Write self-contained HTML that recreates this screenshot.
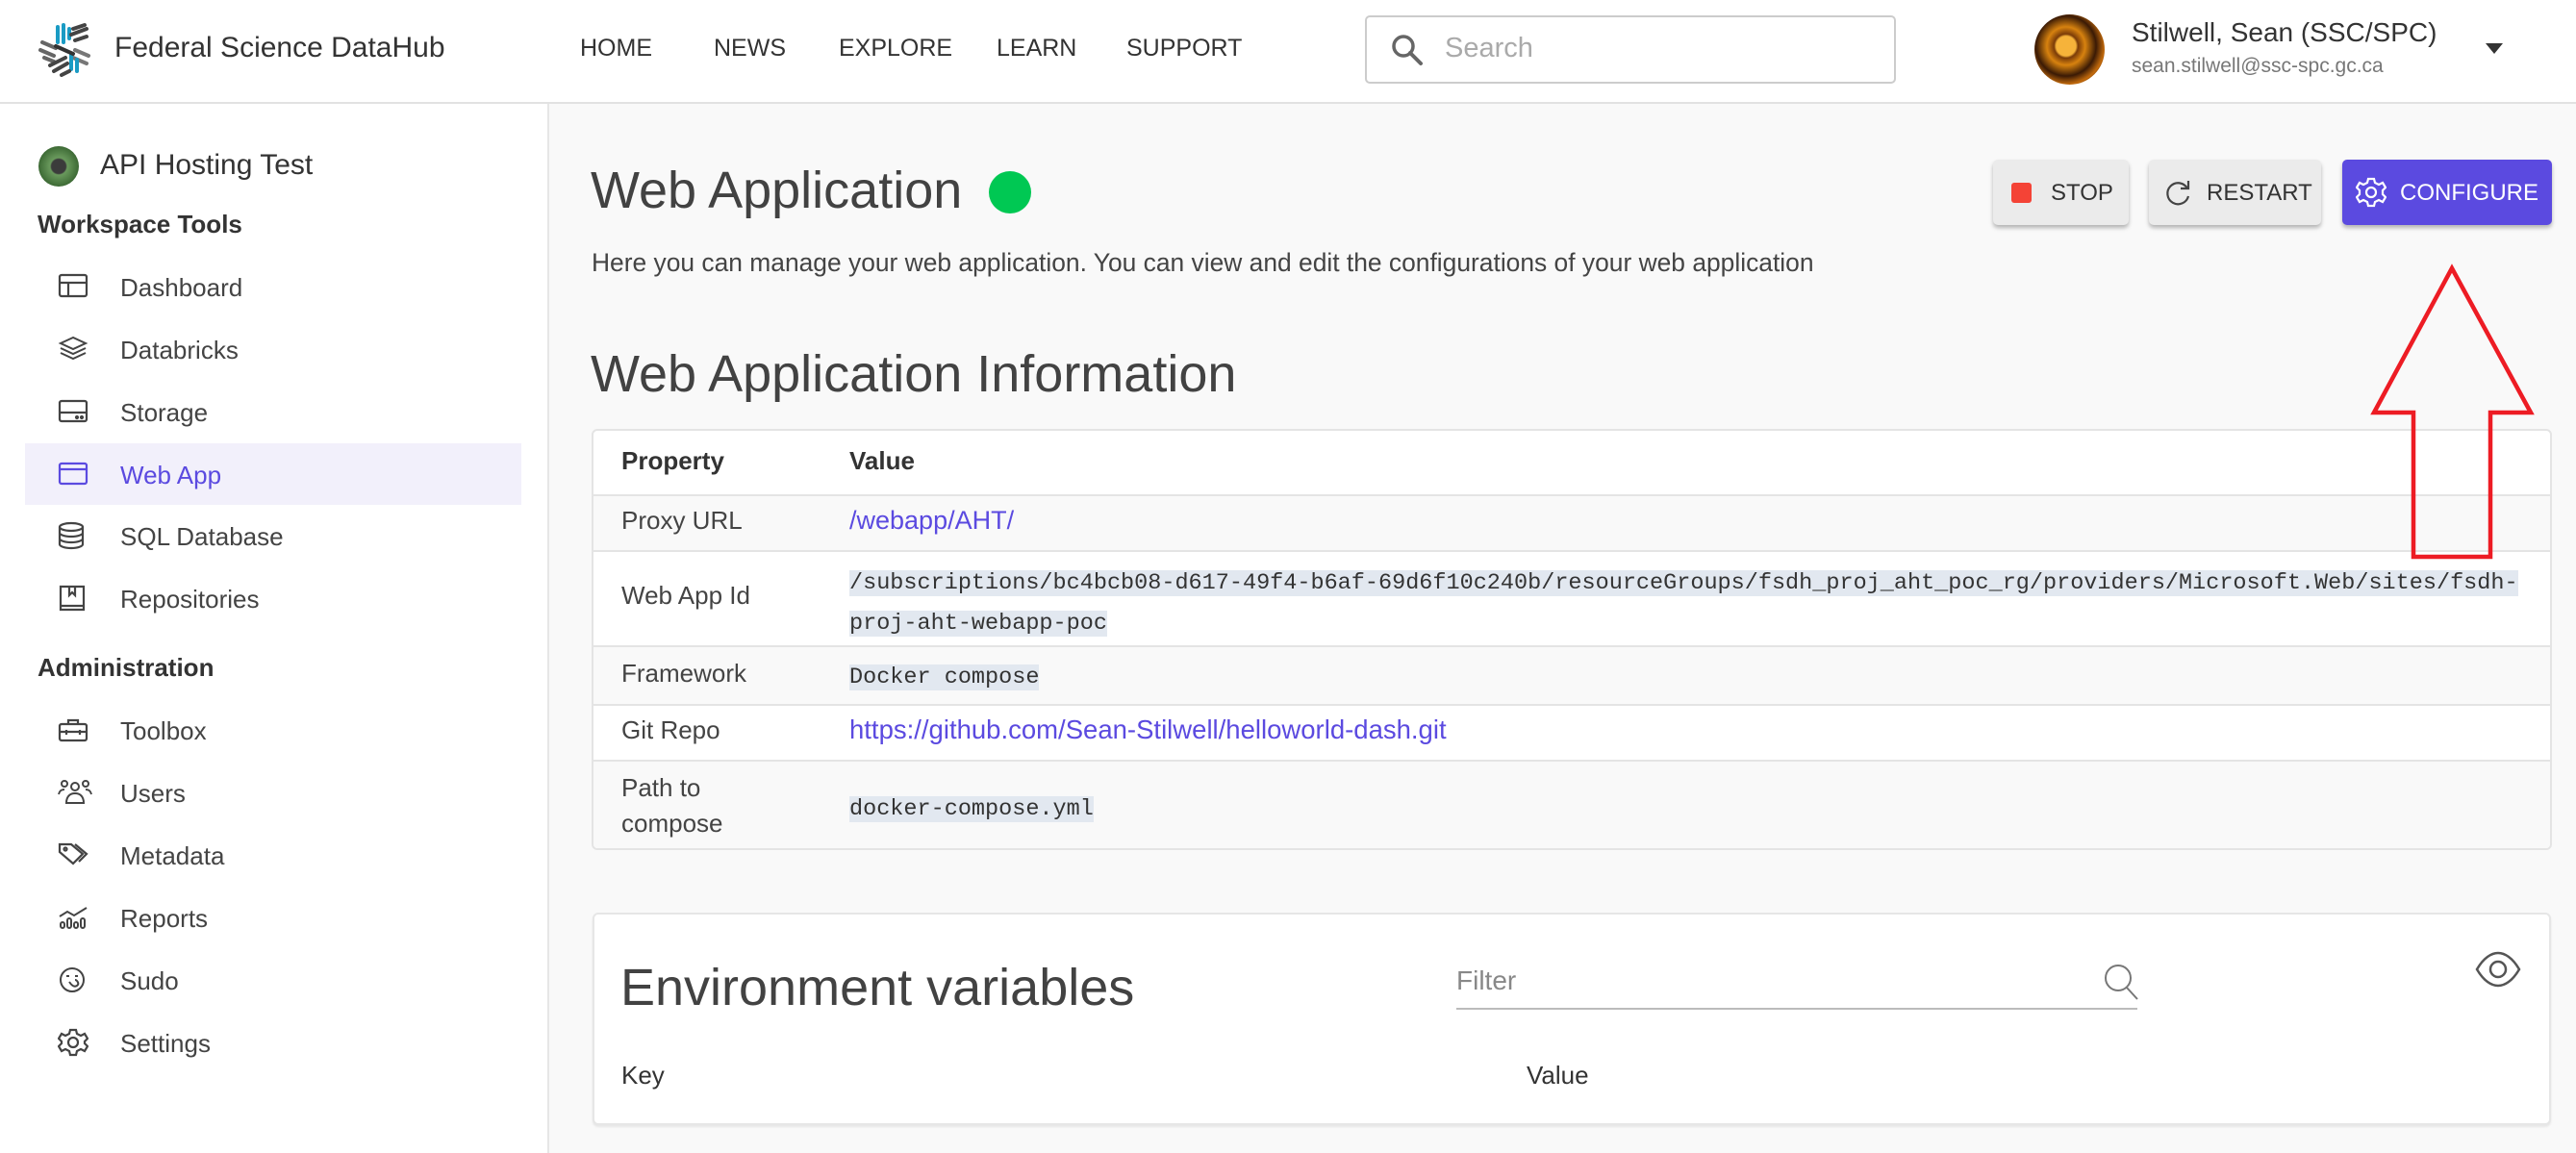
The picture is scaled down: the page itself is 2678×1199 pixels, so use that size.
<!DOCTYPE html>
<html><head><meta charset="utf-8">
<style>
*{margin:0;padding:0;box-sizing:border-box}
body{width:2678px;height:1199px;overflow:hidden;background:#f9f9f9;font-family:"Liberation Sans",sans-serif;color:#424242;position:relative}
.abs{position:absolute;white-space:nowrap}
#hdr{position:absolute;left:0;top:0;width:2678px;height:108px;background:#fff;border-bottom:2px solid #e2e2e2}
#side{position:absolute;left:0;top:108px;width:571px;height:1091px;background:#fff;border-right:2px solid #e6e6e6}
.nav{font-size:25px;color:#333;top:36px}
.si{position:absolute;left:0;width:571px;height:40px}
.si svg{position:absolute;left:60px;top:4px}
.si span{position:absolute;left:125px;top:5px;font-size:26px;color:#444}
.btn{position:absolute;top:166px;height:68px;border-radius:5px;background:#ebebeb;box-shadow:0 3px 4px rgba(0,0,0,.28);font-size:24px;color:#333}
.btn span{position:absolute;top:21px}
.mono{font-family:"Liberation Mono",monospace;font-size:23.5px;background:#e2e8f0;color:#333;line-height:38px}
.cell{position:absolute;font-size:26px;color:#444}
a{color:#5b4ae0;text-decoration:none}
</style></head><body>
<div id="hdr"></div>
<svg class="abs" style="left:38px;top:22px" width="60" height="58" viewBox="0 0 60 58">
<g stroke-linecap="round" stroke-width="4" fill="none">
<path d="M22 6v16M28 4v18M34 8v10" stroke="#1a9bc4"/>
<path d="M38 8l12 -4M36 14l16-6M40 20l12-4" stroke="#444"/>
<path d="M6 22l14 6M4 30l14 6M8 38l10 4" stroke="#666"/>
<path d="M40 30l14 6M38 38l14 6" stroke="#777"/>
<path d="M36 34v16M42 40v12" stroke="#1a9bc4"/>
<path d="M14 46l16-8M18 52l14-8M26 56l8-4" stroke="#444"/>
<path d="M20 26l18 8" stroke="#333"/>
</g></svg>
<div class="abs" style="left:119px;top:33px;font-size:30px;color:#333">Federal Science DataHub</div>
<div class="abs nav" style="left:603px">HOME</div>
<div class="abs nav" style="left:742px">NEWS</div>
<div class="abs nav" style="left:872px">EXPLORE</div>
<div class="abs nav" style="left:1036px">LEARN</div>
<div class="abs nav" style="left:1171px">SUPPORT</div>
<div class="abs" style="left:1419px;top:16px;width:552px;height:71px;border:2px solid #ccc;border-radius:5px;background:#fff"></div>
<svg class="abs" style="left:1446px;top:35px" width="34" height="34" viewBox="0 0 34 34"><circle cx="13" cy="13" r="10" stroke="#666" stroke-width="3.5" fill="none"/><path d="M20 20l11 11" stroke="#666" stroke-width="4" stroke-linecap="round"/></svg>
<div class="abs" style="left:1502px;top:34px;font-size:29px;color:#aaa">Search</div>
<div class="abs" style="left:2115px;top:15px;width:73px;height:73px;border-radius:50%;background:radial-gradient(circle at 45% 45%,#f6b33a 0 18%,#7a3b08 22%,#d7820f 35%,#3a1a05 55%,#c26a0c 70%,#2a1003 90%)"></div>
<div class="abs" style="left:2216px;top:18px;font-size:28px;color:#333">Stilwell, Sean (SSC/SPC)</div>
<div class="abs" style="left:2216px;top:57px;font-size:21px;color:#777">sean.stilwell@ssc-spc.gc.ca</div>
<svg class="abs" style="left:2584px;top:45px" width="18" height="12"><path d="M0 0h18L9 11z" fill="#333"/></svg>

<div id="side"></div>
<div class="abs" style="left:40px;top:152px;width:42px;height:42px;border-radius:50%;background:radial-gradient(circle,#3b3b3b 0 25%,#6a9a5d 30%,#3d6a35 70%)"></div>
<div class="abs" style="left:104px;top:155px;font-size:30px;color:#333">API Hosting Test</div>
<div class="abs" style="left:39px;top:218px;font-size:26px;font-weight:bold;color:#333">Workspace Tools</div>
<div class="abs" style="left:39px;top:679px;font-size:26px;font-weight:bold;color:#333">Administration</div>
<div class="abs" style="left:26px;top:461px;width:516px;height:64px;background:#f2f0fb"></div>

<div class="si" style="top:279px"><svg width="32" height="30" viewBox="0 0 32 30" fill="none" stroke="#444" stroke-width="2.2"><rect x="2" y="3" width="28" height="22" rx="2"/><path d="M2 11h28M11 11v14"/></svg><span>Dashboard</span></div>
<div class="si" style="top:344px"><svg width="32" height="30" viewBox="0 0 32 30" fill="none" stroke="#444" stroke-width="2"><path d="M16 3L3 9l13 6 13-6zM3 14l13 6 13-6M3 19l13 6 13-6"/></svg><span>Databricks</span></div>
<div class="si" style="top:409px"><svg width="32" height="30" viewBox="0 0 32 30" fill="none" stroke="#444" stroke-width="2.2"><rect x="2" y="4" width="28" height="21" rx="2"/><path d="M2 16h28"/><circle cx="20" cy="21" r="1" fill="#444"/><circle cx="25" cy="21" r="1" fill="#444"/></svg><span>Storage</span></div>
<div class="si" style="top:474px"><svg width="32" height="30" viewBox="0 0 32 30" fill="none" stroke="#5b4ae0" stroke-width="2.2"><rect x="2" y="4" width="28" height="21" rx="2"/><path d="M2 10h28"/></svg><span style="color:#5b4ae0">Web App</span></div>
<div class="si" style="top:538px"><svg width="32" height="30" viewBox="0 0 32 30" fill="none" stroke="#444" stroke-width="2.2"><ellipse cx="14" cy="6" rx="12" ry="4"/><path d="M2 6v18c0 2 5 4 12 4s12-2 12-4V6M2 12c0 2 5 4 12 4s12-2 12-4M2 18c0 2 5 4 12 4s12-2 12-4"/></svg><span>SQL Database</span></div>
<div class="si" style="top:603px"><svg width="32" height="30" viewBox="0 0 32 30" fill="none" stroke="#444" stroke-width="2.2"><path d="M3 3h24v20H3zM3 23v4h24v-4M12 3v9l3-3 3 3V3"/></svg><span>Repositories</span></div>
<div class="si" style="top:740px"><svg width="32" height="30" viewBox="0 0 32 30" fill="none" stroke="#444" stroke-width="2.2"><rect x="2" y="9" width="28" height="17" rx="2"/><path d="M11 9V5h10v4M2 17h28M9 15v5M23 15v5"/></svg><span>Toolbox</span></div>
<div class="si" style="top:805px"><svg width="36" height="30" viewBox="0 0 36 30" fill="none" stroke="#444" stroke-width="2"><circle cx="18" cy="9" r="4"/><circle cx="7" cy="6" r="3"/><circle cx="29" cy="6" r="3"/><path d="M9 26c0-7 4-10 9-10s9 3 9 10zM1 17c1-4 3-5 6-5M35 17c-1-4-3-5-6-5"/></svg><span>Users</span></div>
<div class="si" style="top:870px"><svg width="32" height="30" viewBox="0 0 32 30" fill="none" stroke="#444" stroke-width="2.2"><path d="M2 4h12l12 10-10 10L2 12zM18 4l12 10-8 8"/><circle cx="8" cy="9" r="1.5"/></svg><span>Metadata</span></div>
<div class="si" style="top:935px"><svg width="32" height="30" viewBox="0 0 32 30" fill="none" stroke="#444" stroke-width="2"><path d="M2 14l8-5 7 4 13-8"/><rect x="3" y="20" width="4" height="6" rx="2"/><rect x="10" y="16" width="4" height="10" rx="2"/><rect x="17" y="20" width="4" height="6" rx="2"/><rect x="24" y="16" width="4" height="10" rx="2"/></svg><span>Reports</span></div>
<div class="si" style="top:1000px"><svg width="32" height="30" viewBox="0 0 32 30" fill="none" stroke="#444" stroke-width="2"><circle cx="15" cy="15" r="12"/><path d="M9 11h3M18 11h3M12 17c2 3 5 6 8 4s0-6-2-6"/></svg><span>Sudo</span></div>
<div class="si" style="top:1065px"><svg width="32" height="30" viewBox="0 0 32 30" fill="none" stroke="#444" stroke-width="2.2"><circle cx="16" cy="15" r="5"/><path d="M13 2h6l1 4 4 2 4-2 3 5-3 3v2l3 3-3 5-4-2-4 2-1 4h-6l-1-4-4-2-4 2-3-5 3-3v-2l-3-3 3-5 4 2 4-2z"/></svg><span>Settings</span></div>

<div class="abs" style="left:614px;top:167px;font-size:54px;color:#424242">Web Application</div>
<div class="abs" style="left:1028px;top:178px;width:44px;height:44px;border-radius:50%;background:#00c853"></div>
<div class="abs" style="left:615px;top:258px;font-size:26.4px;color:#444">Here you can manage your web application. You can view and edit the configurations of your web application</div>

<div class="btn" style="left:2072px;width:141px"><div class="abs" style="left:19px;top:24px;width:21px;height:21px;background:#f44336;border-radius:3px"></div><span style="left:60px">STOP</span></div>
<div class="btn" style="left:2234px;width:179px"><svg class="abs" style="left:14px;top:18px" width="32" height="32" viewBox="0 0 32 32" fill="none" stroke="#444" stroke-width="2.2"><path d="M26 12A11 11 0 1 0 27 20"/><path d="M27 4v8h-8"/></svg><span style="left:60px">RESTART</span></div>
<div class="btn" style="left:2435px;width:218px;background:#5b4ae0;color:#fff"><svg class="abs" style="left:14px;top:18px" width="32" height="32" viewBox="0 0 32 32" fill="none" stroke="#fff" stroke-width="2.2"><circle cx="16" cy="16" r="5"/><path d="M13 2h6l1 4 4 2 4-2 3 5-3 3v4l3 3-3 5-4-2-4 2-1 4h-6l-1-4-4-2-4 2-3-5 3-3v-4l-3-3 3-5 4 2 4-2z"/></svg><span style="left:60px">CONFIGURE</span></div>

<div class="abs" style="left:614px;top:358px;font-size:54px;color:#424242">Web Application Information</div>

<div class="abs" style="left:615px;top:446px;width:2038px;height:438px;border:2px solid #e4e4e4;border-radius:6px;background:#fff;overflow:hidden">
 <div style="position:absolute;left:0;top:66px;width:100%;height:58px;background:#f9f9f9;border-top:2px solid #e4e4e4"></div>
 <div style="position:absolute;left:0;top:124px;width:100%;height:99px;border-top:2px solid #e4e4e4"></div>
 <div style="position:absolute;left:0;top:223px;width:100%;height:61px;background:#f9f9f9;border-top:2px solid #e4e4e4"></div>
 <div style="position:absolute;left:0;top:284px;width:100%;height:58px;border-top:2px solid #e4e4e4"></div>
 <div style="position:absolute;left:0;top:342px;width:100%;height:96px;background:#f9f9f9;border-top:2px solid #e4e4e4"></div>
</div>
<div class="cell" style="left:646px;top:464px;font-weight:bold;color:#333">Property</div>
<div class="cell" style="left:883px;top:464px;font-weight:bold;color:#333">Value</div>
<div class="cell" style="left:646px;top:526px">Proxy URL</div>
<div class="cell" style="left:883px;top:526px;font-size:27px"><a>/webapp/AHT/</a></div>
<div class="cell" style="left:646px;top:604px">Web App Id</div>
<div class="cell" style="left:883px;top:584px;line-height:38px"><span class="mono">/subscriptions/bc4bcb08-d617-49f4-b6af-69d6f10c240b/resourceGroups/fsdh_proj_aht_poc_rg/providers/Microsoft.Web/sites/fsdh-</span><br><span class="mono">proj-aht-webapp-poc</span></div>
<div class="cell" style="left:646px;top:685px">Framework</div>
<div class="cell" style="left:883px;top:682px;line-height:38px"><span class="mono">Docker compose</span></div>
<div class="cell" style="left:646px;top:744px">Git Repo</div>
<div class="cell" style="left:883px;top:743px;font-size:27.5px"><a>https://github.com/Sean-Stilwell/helloworld-dash.git</a></div>
<div class="cell" style="left:646px;top:801px;line-height:37px">Path to<br>compose</div>
<div class="cell" style="left:883px;top:819px;line-height:38px"><span class="mono">docker-compose.yml</span></div>

<svg class="abs" style="left:2460px;top:272px" width="180" height="315" viewBox="2460 272 180 315"><path d="M2549 279L2468 429H2509V579H2589V429H2631Z" fill="none" stroke="#ed1c24" stroke-width="4.5" stroke-linejoin="miter"/></svg>

<div class="abs" style="left:616px;top:949px;width:2036px;height:221px;background:#fff;border:2px solid #e6e6e6;border-radius:6px;box-shadow:0 2px 2px rgba(0,0,0,.08)"></div>
<div class="abs" style="left:645px;top:996px;font-size:54px;color:#424242">Environment variables</div>
<div class="abs" style="left:1514px;top:1004px;font-size:28px;color:#888">Filter</div>
<div class="abs" style="left:1514px;top:1048px;width:708px;height:2px;background:#bbb"></div>
<svg class="abs" style="left:2186px;top:1001px" width="38" height="40" viewBox="0 0 38 40" fill="none" stroke="#777" stroke-width="2"><circle cx="16" cy="16" r="13"/><path d="M25 26l11 12"/></svg>
<svg class="abs" style="left:2572px;top:988px" width="50" height="40" viewBox="0 0 50 40" fill="none" stroke="#555" stroke-width="2.5"><path d="M3 20C10 8 18 3 25 3s15 5 22 17c-7 12-15 17-22 17S10 32 3 20z"/><circle cx="25" cy="20" r="8"/></svg>
<div class="abs" style="left:646px;top:1103px;font-size:26px;color:#333">Key</div>
<div class="abs" style="left:1587px;top:1103px;font-size:26px;color:#333">Value</div>
</body></html>
